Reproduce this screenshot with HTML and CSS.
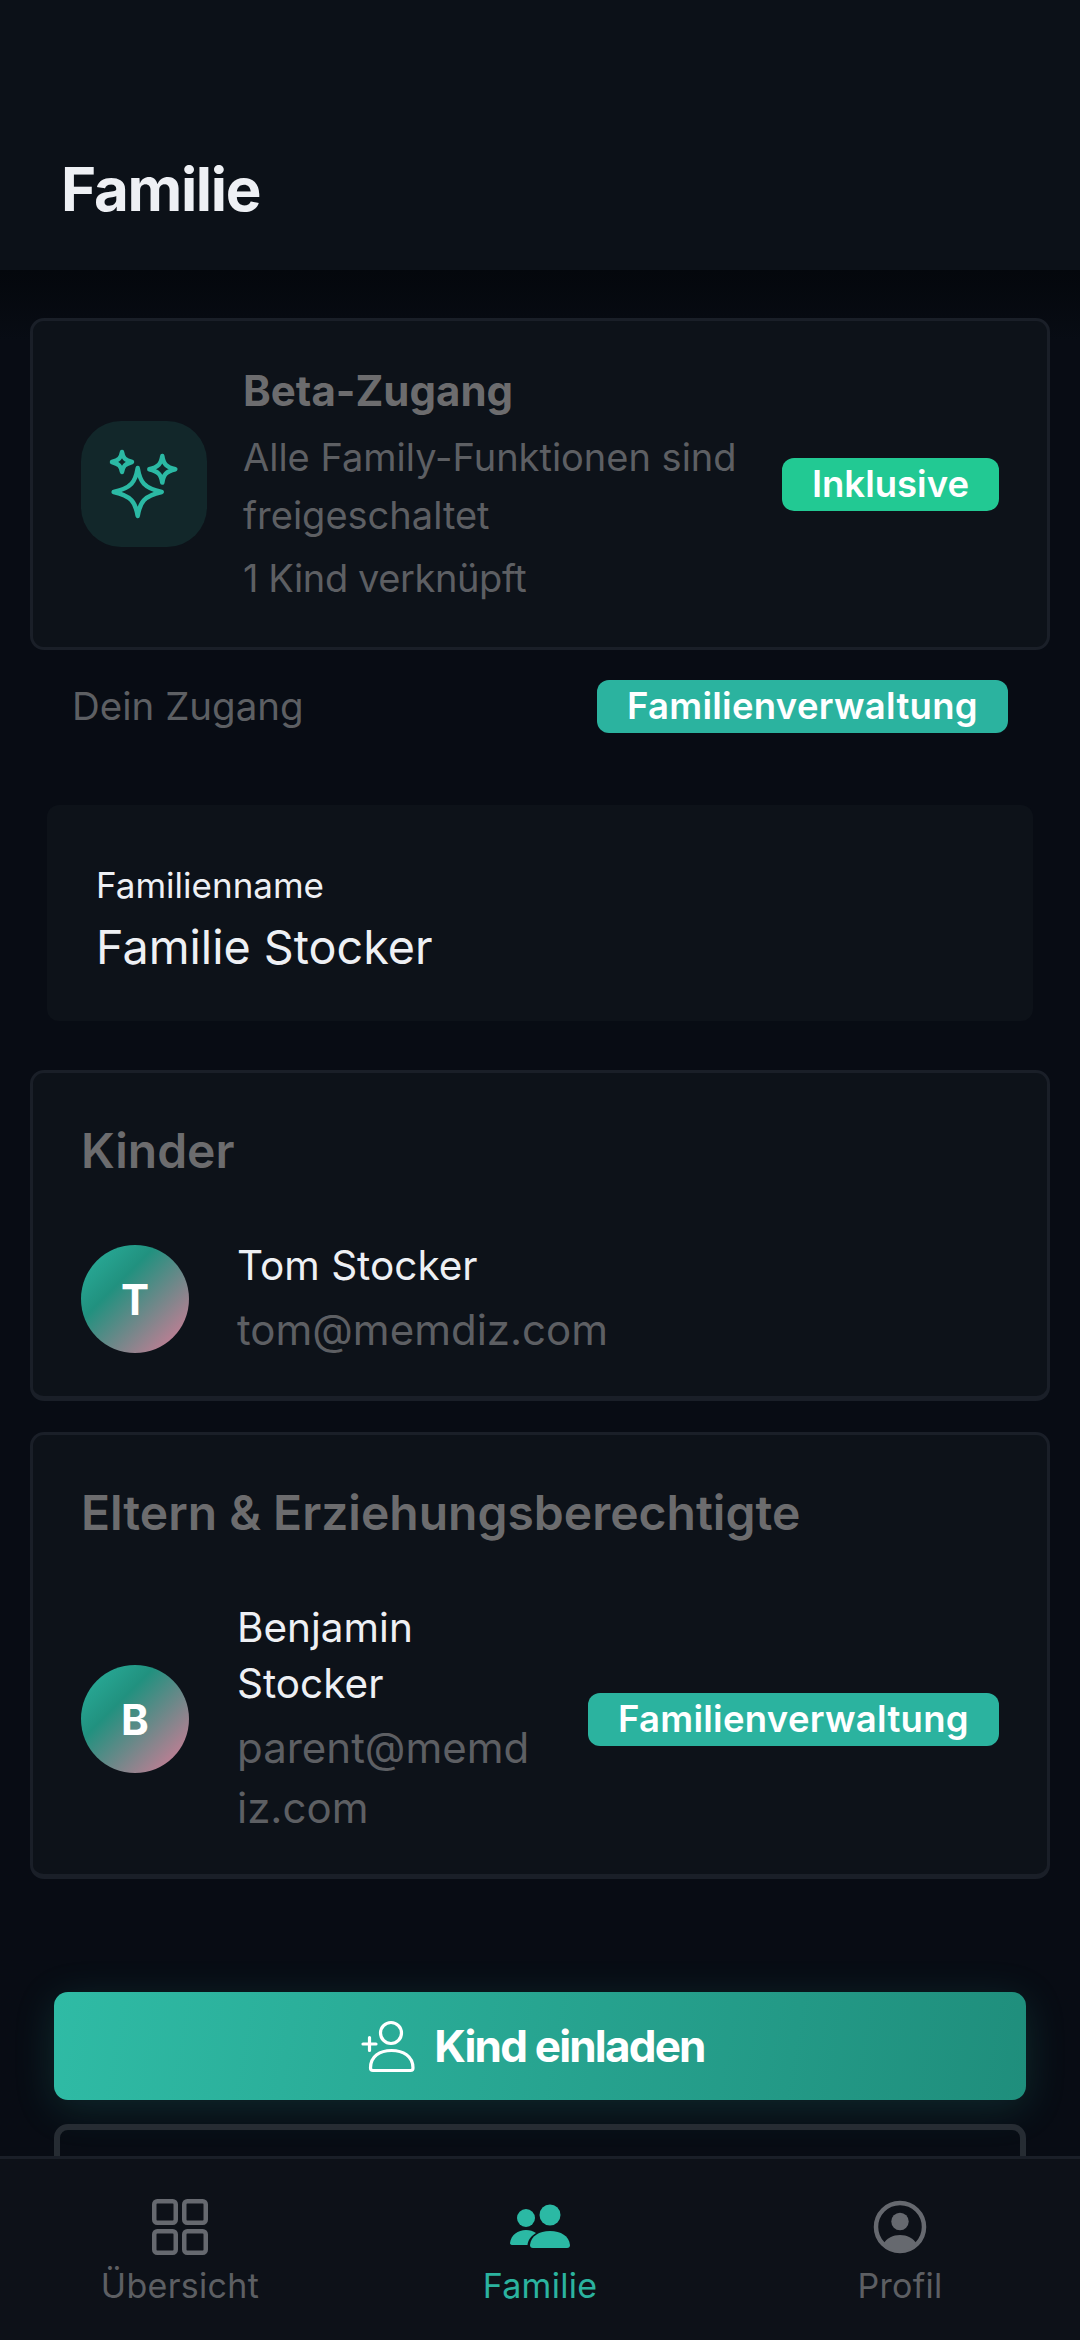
FILE: index.html
```html
<!DOCTYPE html>
<html lang="de">
<head>
  <meta charset="UTF-8" />
  <meta name="viewport" content="width=device-width, initial-scale=1.0"/>
  <title>Familie</title>
  <link rel="stylesheet" href="styles.css">
</head>
<body>
  <div class="app">
    <header class="topbar">
      <h1>Familie</h1>
    </header>

    <main class="content">
      <section class="card plan">
        <div class="plan-icon">
          <svg viewBox="0 0 126 126" width="126" height="126" fill="none" stroke="#2bb9a4" stroke-width="4.500" stroke-linejoin="round">
            <path d="M56.7 47C59 61 63 67 80.7 71C63 75 59 81 56.7 95C54.400 81 50.400 75 32.700 71C50.400 67 54.400 61 56.700 47Z"/>
            <path d="M41 31C42 37 44 39 51 41C44 43 42 45 41 51C40 45 38 43 31 41C38 39 40 37 41 31Z"/>
            <path d="M81.300 35C82.500 43 85 46 94.300 48.300C85 50.600 82.500 53.600 81.300 61.600C80 53.600 77.500 50.600 68.300 48.300C77.500 46 80 43 81.300 35Z"/>
          </svg>
        </div>
        <div class="plan-text">
          <h3>Beta-Zugang</h3>
          <p>Alle Family-Funktionen sind freigeschaltet</p>
          <p class="plan-count">1 Kind verknüpft</p>
        </div>
        <span class="badge badge-green">Inklusive</span>
      </section>

      <div class="access-row">
        <span>Dein Zugang</span>
        <span class="badge badge-teal">Familienverwaltung</span>
      </div>

      <section class="family-name">
        <label>Familienname</label>
        <div class="family-value">Familie Stocker</div>
      </section>

      <section class="card members">
        <h2>Kinder</h2>
        <div class="member">
          <div class="avatar">T</div>
          <div class="member-info">
            <div class="member-name">Tom Stocker</div>
            <div class="member-mail">tom@memdiz.com</div>
          </div>
        </div>
      </section>

      <section class="card members">
        <h2>Eltern &amp; Erziehungsberechtigte</h2>
        <div class="member">
          <div class="avatar">B</div>
          <div class="member-info">
            <div class="member-name">Benjamin Stocker</div>
            <div class="member-mail">parent@memdiz.com</div>
          </div>
          <span class="badge badge-teal">Familienverwaltung</span>
        </div>
      </section>

      <div class="actions">
        <button class="btn-primary">
          <svg viewBox="0 0 60 56" width="60" height="56" fill="none" stroke="#fff" stroke-width="3.200" stroke-linecap="round" stroke-linejoin="round">
            <circle cx="36" cy="15" r="10.500"/>
            <path d="M8 26H21M14.500 19.500V32.500"/>
            <path d="M15.500 50C15.500 38 25 32.500 36.500 32.500C48 32.500 58 38 58 50C58 51.500 57 52.500 55.500 52.500H18C16.500 52.500 15.500 51.500 15.500 50Z"/>
          </svg>
          Kind einladen
        </button>
        <button class="btn-outline"></button>
      </div>
    </main>

    <nav class="tabbar">
      <a class="tab" href="#">
        <svg viewBox="0 0 56 56" width="56" height="56" fill="none" stroke="#66696f" stroke-width="4.500">
          <rect x="2.250" y="2.250" width="21.500" height="21.500" rx="3"/>
          <rect x="32.250" y="2.250" width="21.500" height="21.500" rx="3"/>
          <rect x="2.250" y="32.250" width="21.500" height="21.500" rx="3"/>
          <rect x="32.250" y="32.250" width="21.500" height="21.500" rx="3"/>
        </svg>
        Übersicht
      </a>
      <a class="tab active" href="#">
        <svg viewBox="0 0 68 56" width="68" height="56" fill="#2bb9a4">
          <circle cx="20" cy="19" r="9"/>
          <circle cx="44" cy="16" r="10.500"/>
          <path d="M4 44C5 36 12 31 20 31C24 31 27 32 30 34C25 37 22 41 21.500 46H7C5 46 4 45.500 4 44Z"/>
          <path d="M24 46C25 37 33 32 44 32C55 32 63 37 64 46C64 48 63 49 61 49H27C25 49 24 48 24 46Z"/>
        </svg>
        Familie
      </a>
      <a class="tab" href="#">
        <svg viewBox="0 0 56 56" width="56" height="56">
          <circle cx="28" cy="28" r="24" fill="none" stroke="#66696f" stroke-width="4.500"/>
          <circle cx="28" cy="22.500" r="8.700" fill="#66696f"/>
          <path d="M11 45C15 39 21 36 28 36C35 36 41 39 45 45C41 50 35 52 28 52C21 52 15 50 11 45Z" fill="#66696f"/>
        </svg>
        Profil
      </a>
    </nav>
  </div>
</body>
</html>
```

FILE: styles.css
```css
* {
  box-sizing: border-box;
}
body {
  margin: 0;
  padding: 0;
  font-family: Inter, "Noto Sans", sans-serif;
  background: #070b12;
  color: #fff;
}
h1, h2, h3, p {
  margin: 0;
}
.app {
  display: flex;
  flex-direction: column;
  height: 2340px;
  overflow: hidden;
}
.topbar {
  height: 270px;
  flex: none;
  display: flex;
  align-items: flex-end;
  padding: 0 61px 39px;
  background: #0c1118;
}
.topbar h1 {
  font-size: 60px;
  line-height: 84px;
  font-weight: 700;
  letter-spacing: -1.300px;
  color: #eef0f4;
}
.content {
  flex: 1;
  min-height: 0;
  overflow: hidden;
  padding: 48px 30px 0;
  background: linear-gradient(#04070c, #080c14 70px);
}
.card {
  background: #0d1219;
  border: 3px solid #1a1f28;
  border-radius: 14px;
}
.plan {
  height: 332px;
  display: flex;
  align-items: center;
  padding: 0 48px;
}
.plan-icon {
  width: 126px;
  height: 126px;
  flex: none;
  border-radius: 40px;
  background: #12272a;
}
.plan-icon svg {
  display: block;
}
.plan-text {
  flex: 1;
  min-width: 0;
  padding-left: 36px;
  padding-right: 30px;
}
.plan-text h3 {
  margin-bottom: 8px;
  font-size: 42px;
  line-height: 58px;
  font-weight: 700;
  color: #6c6c6e;
}
.plan-text p {
  font-size: 38px;
  line-height: 58px;
  color: #5d5f63;
}
.plan-text .plan-count {
  margin-top: 5px;
  letter-spacing: -0.400px;
}
.badge {
  flex: none;
  height: 53px;
  display: flex;
  align-items: center;
  padding: 0 30px;
  border-radius: 12px;
  font-size: 36.500px;
  font-weight: 600;
  color: #fff;
}
.badge-green {
  background: #22c993;
}
.badge-teal {
  background: #2bb39f;
  letter-spacing: 0.300px;
}
.access-row {
  height: 112px;
  display: flex;
  align-items: center;
  justify-content: space-between;
  padding: 0 42px;
  font-size: 38.500px;
  color: #5d5f63;
}
.family-name {
  height: 216px;
  margin: 43px 17px 0;
  padding: 54px 49px 0;
  background: #0d1219;
  border-radius: 12px;
}
.family-name label {
  display: block;
  font-size: 35px;
  line-height: 52px;
  color: #eef0f4;
}
.family-value {
  margin-top: 3px;
  font-size: 46.700px;
  line-height: 66px;
  color: #eef0f4;
}
.members {
  margin-top: 31px;
  padding: 46px 48px 0;
  border-bottom-width: 5px;
}
.family-name + .members {
  margin-top: 49px;
}
.members h2 {
  font-size: 48px;
  line-height: 64px;
  font-weight: 600;
  color: #6c6c6e;
}
.member {
  display: flex;
  align-items: center;
  gap: 48px;
  padding: 55px 0 36px;
}
.member .badge {
  margin-left: 4px;
}
.avatar {
  width: 108px;
  height: 108px;
  flex: none;
  display: flex;
  align-items: center;
  justify-content: center;
  border-radius: 50%;
  background: linear-gradient(135deg, #2bb39f 0%, #21917f 35%, #e07a98 100%);
  font-size: 42px;
  font-weight: 700;
}
.member-info {
  flex: 1;
  min-width: 0;
  overflow-wrap: anywhere;
}
.member-name {
  font-size: 40.500px;
  line-height: 56px;
  color: #eef0f4;
}
.member-mail {
  font-size: 42px;
  line-height: 60px;
  margin-top: 6px;
  color: #5d5f63;
}
.actions {
  margin-top: 113px;
  padding: 0 24px;
}
.btn-primary {
  width: 100%;
  height: 108px;
  display: flex;
  align-items: center;
  justify-content: center;
  gap: 19px;
  padding: 0 20px 0 0;
  border: none;
  border-radius: 14px;
  background: linear-gradient(100deg, #2fbba5, #1f8e7c);
  box-shadow: 0 8px 40px rgba(43, 179, 159, 0.18);
  color: #fff;
  font-family: inherit;
  font-size: 44px;
  font-weight: 700;
  letter-spacing: -1.800px;
}
.btn-outline {
  display: block;
  width: 100%;
  height: 108px;
  margin-top: 24px;
  background: none;
  border: 6px solid #262c33;
  border-radius: 14px;
}
.tabbar {
  height: 184px;
  flex: none;
  display: grid;
  grid-template-columns: repeat(3, 1fr);
  padding-top: 40px;
  background: #0d1118;
  border-top: 3px solid #1a1f28;
}
.tab {
  display: flex;
  flex-direction: column;
  align-items: center;
  gap: 8px;
  font-size: 34px;
  line-height: 46px;
  letter-spacing: 0.300px;
  color: #5d5f63;
  text-decoration: none;
}
.tab.active {
  color: #2bb39f;
}
```
